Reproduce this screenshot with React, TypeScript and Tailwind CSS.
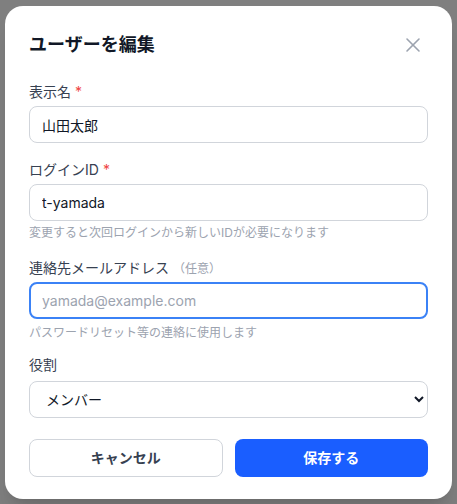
import { X } from "lucide-react";

export default function App() {
  return (
    <div
      className="min-h-screen w-full bg-[#7f7f7f] p-[6px] pl-[5px] pr-[5px]"
      style={{ fontFamily: 'Inter, "Noto Sans CJK JP", sans-serif' }}
    >
      <div className="bg-white rounded-[18px] px-6 pt-[25px] pb-[22px] shadow-xl">
        <div className="flex items-center justify-between">
          <h2 className="text-[18px] leading-7 font-bold text-[#111827]">ユーザーを編集</h2>
          <button className="text-[#9ca3af] mr-[3px]">
            <X size={24} strokeWidth={1.6} />
          </button>
        </div>

        <div className="mt-[23px] flex flex-col">
          <label className="text-sm leading-5 text-[#374151]">
            表示名<span className="text-[#ef4444] ml-1">*</span>
          </label>
          <input
            type="text"
            defaultValue="山田太郎"
            className="mt-1 h-[37px] rounded-lg border border-[#d1d5db] px-3 text-sm text-[#111827] outline-none"
          />

          <label className="mt-[17px] text-sm leading-5 text-[#374151]">
            ログインID<span className="text-[#ef4444] ml-1">*</span>
          </label>
          <input
            type="text"
            defaultValue="t-yamada"
            className="mt-1 h-[37px] rounded-lg border border-[#d1d5db] px-3 text-sm text-[#111827] outline-none"
          />
          <p className="mt-1 text-xs leading-4 text-[#9ca3af]">変更すると次回ログインから新しいIDが必要になります</p>

          <label className="mt-[17px] text-sm leading-5 text-[#374151]">
            連絡先メールアドレス<span className="ml-1 text-xs text-[#9ca3af]">（任意）</span>
          </label>
          <input
            type="email"
            placeholder="yamada@example.com"
            className="mt-1 h-[37px] rounded-lg border-2 border-[#3b82f6] px-[11px] text-sm text-[#111827] placeholder:text-[#9ca3af] outline-none"
          />
          <p className="mt-1.5 text-xs leading-4 text-[#9ca3af]">パスワードリセット等の連絡に使用します</p>

          <label className="mt-[14px] text-sm leading-5 text-[#374151]">役割</label>
          <select
            defaultValue="member"
            className="mt-1.5 h-[37px] rounded-lg border border-[#d1d5db] bg-white px-3 text-sm text-[#111827] outline-none"
          >
            <option value="member">メンバー</option>
            <option value="admin">管理者</option>
          </select>
        </div>

        <div className="mt-[21px] grid grid-cols-2 gap-3">
          <button className="h-[38px] rounded-lg border border-[#d1d5db] bg-white text-sm font-semibold text-[#374151]">
            キャンセル
          </button>
          <button className="h-[38px] rounded-lg bg-[#1a5eff] text-sm font-semibold text-white">
            保存する
          </button>
        </div>
      </div>
    </div>
  );
}
